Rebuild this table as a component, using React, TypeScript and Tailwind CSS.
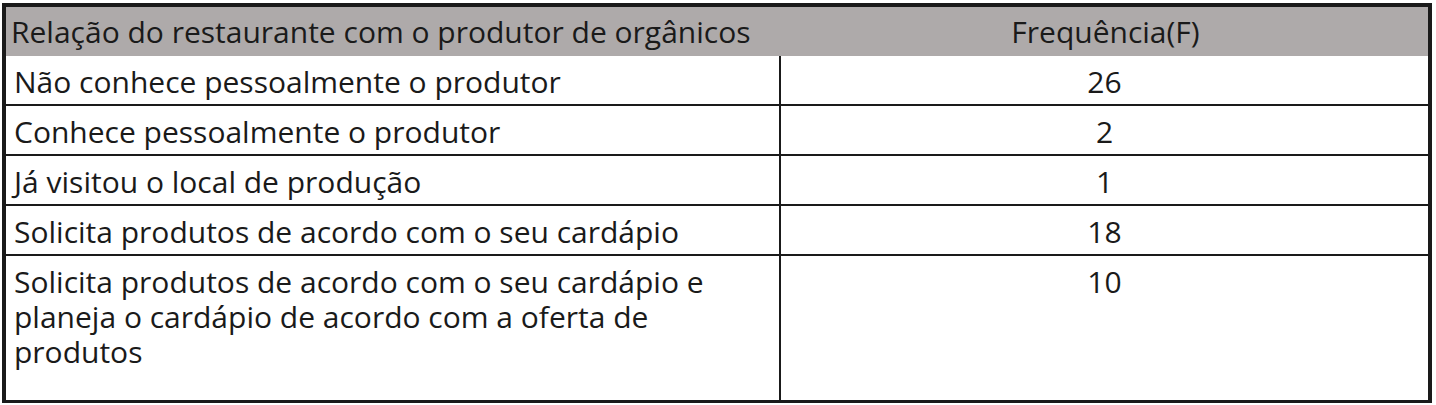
import React from "react";

const rows: [string, string][] = [
  ["Não conhece pessoalmente o produtor", "26"],
  ["Conhece pessoalmente o produtor", "2"],
  ["Já visitou o local de produção", "1"],
  ["Solicita produtos de acordo com o seu cardápio", "18"],
  [
    "Solicita produtos de acordo com o seu cardápio e planeja o cardápio de acordo com a oferta de produtos",
    "10",
  ],
];

export default function App() {
  return (
    <div
      className="w-[1436px] h-[405px] bg-white pl-[2px] pt-[3px] text-[#1a1a1a]"
      style={{ fontFamily: '"Open Sans", "Noto Sans", sans-serif' }}
    >
      <div className="w-[1430px] h-[400px] border-l-4 border-t-4 border-r-4 border-b-[3px] border-[#1a1a1a] flex flex-col text-[30px] leading-[35px]">
        <div className="flex h-[49px] bg-[#aeaaaa] shrink-0">
          <div className="w-[775px] pl-[5px] pt-[7px] whitespace-nowrap">
            Relação do restaurante com o produtor de orgânicos
          </div>
          <div className="flex-1 text-center pt-[7px] pl-[2px]">Frequência(F)</div>
        </div>
        {rows.map(([label, value], i) => {
          const last = i === rows.length - 1;
          return (
            <div
              key={i}
              className={
                last
                  ? "flex flex-1"
                  : "flex h-[50px] shrink-0 border-b-2 border-[#1a1a1a]"
              }
            >
              <div className="w-[775px] pl-[8px] pr-[60px] pt-[8px] border-r-2 border-[#1a1a1a]">
                {label}
              </div>
              <div className="flex-1 text-center pt-[8px]">{value}</div>
            </div>
          );
        })}
      </div>
    </div>
  );
}
